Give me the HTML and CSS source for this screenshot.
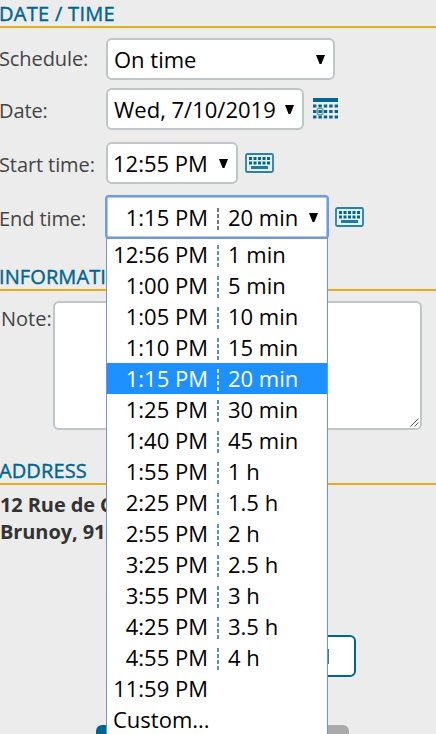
FILE: index.html
```html
<!DOCTYPE html>
<html lang="en">
<head>
<meta charset="utf-8">
<title>Schedule</title>
<link rel="stylesheet" href="styles.css">
</head>
<body>
<svg class="defs" aria-hidden="true">
  <symbol id="keyboard" viewBox="0 0 29 20">
    <rect x="1" y="1" width="27" height="18" rx="1.5" fill="#e3f0f5" stroke="#2b81a6" stroke-width="1.8"/>
    <path d="M4 5.5h21M4 10h21" stroke="#006591" stroke-width="2.8" stroke-dasharray="3 1.5"/>
    <path d="M6 14.5h17" stroke="#1f7aa3" stroke-width="3"/>
  </symbol>
  <symbol id="arrow" viewBox="0 0 9 9"><path d="M0 0h9L5.4 9H3.6z"/></symbol>
</svg>
<main class="form">
  <section class="schedule">
    <h2 class="title">DATE / TIME</h2>
    <div class="row">
      <span class="label">Schedule:</span>
      <div class="select select-type"><span>On time</span><svg class="arrow"><use href="#arrow"/></svg></div>
    </div>
    <div class="row row-date">
      <span class="label">Date:</span>
      <div class="select select-date"><span>Wed, 7/10/2019</span><svg class="arrow"><use href="#arrow"/></svg></div>
      <svg class="calendar" viewBox="0 0 25 21">
        <path d="M0 2h25" stroke="#006591" stroke-width="4"/>
        <path d="M0 8h25M0 13.5h25M0 19h25" stroke="#006591" stroke-width="3" stroke-dasharray="3.4 2"/>
        <rect x="4.4" y="10.3" width="5.4" height="6.4" rx="1" fill="none" stroke="#5a9cba" stroke-width="1.3"/>
      </svg>
    </div>
    <div class="row row-start">
      <span class="label">Start time:</span>
      <div class="select select-start"><span>12:55 PM</span><svg class="arrow"><use href="#arrow"/></svg></div>
      <svg class="keyboard"><use href="#keyboard"/></svg>
    </div>
    <div class="row row-end">
      <span class="label">End time:</span>
      <div class="select select-end">
        <span class="time">1:15 PM</span><i class="sep"></i><span>20 min</span><svg class="arrow"><use href="#arrow"/></svg>
        <ul class="menu">
          <li><span class="time">12:56 PM</span><i class="sep"></i><span>1 min</span></li>
          <li><span class="time">1:00 PM</span><i class="sep"></i><span>5 min</span></li>
          <li><span class="time">1:05 PM</span><i class="sep"></i><span>10 min</span></li>
          <li><span class="time">1:10 PM</span><i class="sep"></i><span>15 min</span></li>
          <li class="active"><span class="time">1:15 PM</span><i class="sep"></i><span>20 min</span></li>
          <li><span class="time">1:25 PM</span><i class="sep"></i><span>30 min</span></li>
          <li><span class="time">1:40 PM</span><i class="sep"></i><span>45 min</span></li>
          <li><span class="time">1:55 PM</span><i class="sep"></i><span>1 h</span></li>
          <li><span class="time">2:25 PM</span><i class="sep"></i><span>1.5 h</span></li>
          <li><span class="time">2:55 PM</span><i class="sep"></i><span>2 h</span></li>
          <li><span class="time">3:25 PM</span><i class="sep"></i><span>2.5 h</span></li>
          <li><span class="time">3:55 PM</span><i class="sep"></i><span>3 h</span></li>
          <li><span class="time">4:25 PM</span><i class="sep"></i><span>3.5 h</span></li>
          <li><span class="time">4:55 PM</span><i class="sep"></i><span>4 h</span></li>
          <li><span class="time">11:59 PM</span></li>
          <li><span>Custom...</span></li>
        </ul>
      </div>
      <svg class="keyboard"><use href="#keyboard"/></svg>
    </div>
  </section>
  <section class="information">
    <h2 class="title">INFORMATI</h2>
    <div class="note">
      <span class="note-label">Note:</span>
      <div class="textarea"><svg class="grip" viewBox="0 0 9 9"><path d="M.5 8.5l8-8M4.5 8.5l4-4" stroke="#555" fill="none"/></svg></div>
    </div>
  </section>
  <section class="address">
    <h2 class="title">ADDRESS</h2>
    <p>12 Rue de C<br>Brunoy, 91</p>
    <div class="outline-button"><i class="stem"></i></div>
  </section>
  <footer class="actions"><div class="primary"></div><div class="secondary"></div></footer>
</main>
</body>
</html>
```
FILE: styles.css
```css
* { box-sizing: border-box; }
body {
  margin: 0;
  height: 734px;
  overflow: hidden;
  background: #ececec;
  color: #444;
  font: 20px/27px "Open Sans", sans-serif;
}
.defs { position: absolute; width: 0; height: 0; }
.form { height: 734px; overflow: hidden; }
.title {
  margin: 0;
  height: 28px;
  border-bottom: 2px solid #e5ac20;
  color: #006591;
  font-size: 20px;
  font-weight: 400;
  line-height: 27px;
  letter-spacing: 0.3px;
  text-indent: -1px;
  white-space: nowrap;
  -webkit-text-stroke: 0.4px #006591;
}
.information .title, .address .title { letter-spacing: 0.1px; }
.schedule { height: 263px; }
.row { display: flex; height: 42px; margin-top: 10px; }
.row-date { margin-top: 8px; }
.row-start { margin-top: 12px; }
.row-end { margin-top: 12px; }
.label { width: 106px; flex: none; line-height: 42px; letter-spacing: -0.1px; text-indent: -1px; }
.row-date .label, .row-start .label, .row-end .label { padding-top: 2px; }
.select {
  position: relative;
  display: flex;
  align-items: center;
  height: 42px;
  padding: 0 8px 0 5px;
  border: 2px solid #c0c5c8;
  border-radius: 6px;
  background: #fff;
  color: #000;
  font-size: 22px;
  line-height: 38px;
  white-space: nowrap;
}
.select-type { width: 229px; }
.select-date { width: 198px; }
.select-start { width: 132px; }
.select-type > span, .select-date > span { padding-left: 1px; }
.select-end { width: 222px; outline: 2px solid #679cf0; outline-offset: -1px; border-radius: 3px; }
.arrow { width: 9px; height: 9px; margin-left: auto; }
.calendar { width: 25px; height: 21px; margin: 10px 0 0 9px; }
.keyboard { width: 29px; height: 20px; margin: 11px 0 0 7px; }
.time { width: 95px; text-align: right; }
.sep {
  width: 2px;
  height: 22px;
  margin: 3px 9px 0;
  background: repeating-linear-gradient(#777 0 4px, transparent 4px 6px);
}
.menu {
  position: absolute;
  z-index: 2;
  top: 40px;
  left: -2px;
  width: 222px;
  margin: 0;
  padding: 0;
  border: 1px solid #7395d6;
  background: #fff;
  list-style: none;
}
.menu li { display: flex; align-items: center; height: 31px; padding-left: 6px; line-height: 31px; }
.menu .sep { background: repeating-linear-gradient(#5793ae 0 4px, transparent 4px 6px); }
.menu .active { background: #1e90ff; color: #fff; }
.menu .active .sep { background: repeating-linear-gradient(#d5eaff 0 4px, transparent 4px 6px); }
.information { height: 194px; }
.note { display: flex; padding: 10px 0 0 1px; }
.note-label { width: 52px; line-height: 35px; }
.textarea {
  display: flex;
  align-items: flex-end;
  justify-content: flex-end;
  width: 369px;
  height: 129px;
  padding: 1px;
  border: 2px solid #c0c5c8;
  border-radius: 6px;
  background: #fff;
}
.grip { width: 9px; height: 9px; }
.address { height: 268px; }
.address p { margin: 0; padding-top: 6px; color: #333; font-weight: 700; letter-spacing: -0.1px; }
.outline-button {
  display: flex;
  align-items: center;
  justify-content: flex-end;
  width: 236px;
  height: 42px;
  margin: 90px 0 0 120px;
  padding-right: 25px;
  border: 2px solid #006591;
  border-radius: 6px;
  background: #fff;
}
.stem { width: 2px; height: 15px; background: #337f9f; }
.actions { display: flex; justify-content: space-between; width: 253px; height: 42px; margin-left: 96px; }
.primary, .secondary { width: 122px; border-radius: 6px; background: #006591; }
.secondary { background: #aaa; }
```
